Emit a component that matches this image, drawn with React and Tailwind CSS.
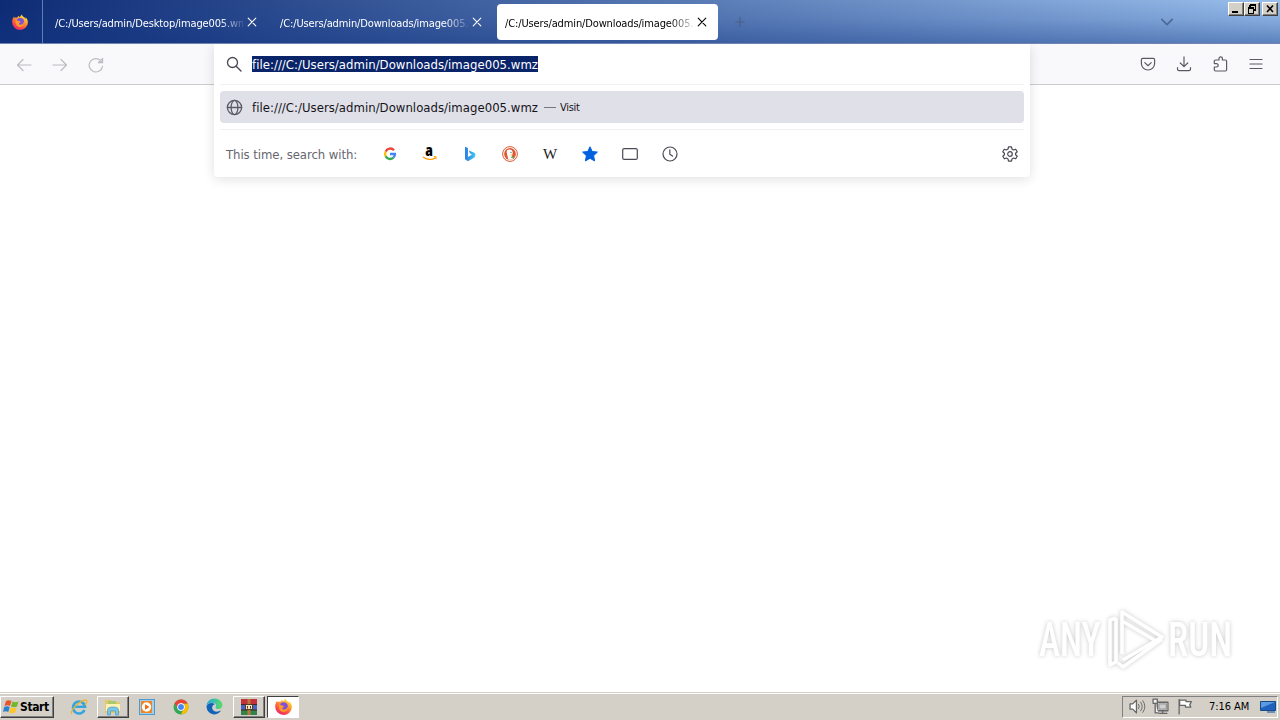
import React from "react";

const ui = "font-['DejaVu_Sans_Condensed','DejaVu_Sans',sans-serif] [font-stretch:condensed]";

function Svg({ s = 16, children, className = "" }) {
  return (
    <svg width={s} height={s} viewBox="0 0 16 16" fill="none" stroke="currentColor" strokeWidth="1.2" strokeLinecap="round" strokeLinejoin="round" className={`shrink-0 ${className}`}>
      {children}
    </svg>
  );
}

function Firefox({ id, s = 16 }) {
  return (
    <svg width={s} height={s} viewBox="0 0 16 16" className="shrink-0">
      <defs>
        <linearGradient id={id} x1="0.8" y1="0" x2="0.25" y2="1">
          <stop offset="0" stopColor="#fff04f" />
          <stop offset="0.35" stopColor="#ffa62c" />
          <stop offset="0.65" stopColor="#ff5b3c" />
          <stop offset="1" stopColor="#e8207a" />
        </linearGradient>
      </defs>
      <path d="M9.7.2c.2 1.3 1.1 2 2.1 2.9 1.1.8 1.5 1.3 1.8 1.9.1-.7 0-1.2-.2-1.7 1.7 1.3 2.5 3.2 2.5 5.1A7.8 7.8 0 0 1 8 16 7.8 7.8 0 0 1 .2 8.2C.1 6 .9 3.7 2.2 2.5c0 .6.1 1 .3 1.5.7-.4 1.6-.5 2.4-.3C5.5 2.7 6.3 2 7.3 1.700c-.3.6-.3 1 0 1.500.9-.6 1.900-1.500 2.400-3z" fill={`url(#${id})`} />
      <circle cx="8.200" cy="8" r="3.900" fill="#8050d8" />
      <path d="M3.600 6.500c1.300-.5 2.400 0 3.300.8 1 .1 1.700.2 1.600.8-.1.700-1.100.8-1.600 1.200-.3 1 .8 1.700 2.100 1.500 1.400-.2 2.500-1.500 2.400-3.100 1.400 2.700-.5 5.300-3.300 5.300-2.800 0-5-2.600-4.500-6.500z" fill="#ff9a28" />
    </svg>
  );
}

function Close() {
  return (
    <svg width="10" height="10" viewBox="0 0 10 10" stroke="currentColor" strokeWidth="1.1" strokeLinecap="round" className="shrink-0">
      <path d="M1.200 1.200l7.600 7.600M8.800 1.200l-7.600 7.600" />
    </svg>
  );
}

function Tab({ title, active, className = "" }) {
  return (
    <div className={`flex h-9 shrink-0 items-center rounded pl-2 pr-[11px] ${active ? "bg-white text-black" : "text-white"} ${className}`}>
      <div className="mt-[3px] h-4 w-[188px] shrink-0 overflow-hidden whitespace-nowrap text-[11px] leading-4 tracking-[-0.13px] [mask-image:linear-gradient(to_right,black_164px,transparent_192px)]">{title}</div>
      <div className="ml-auto flex"><Close /></div>
    </div>
  );
}

const bevel = "border border-t-white border-l-white border-r-[#404040] border-b-[#404040] bg-[#d4d0c8] shadow-[inset_-1px_-1px_0_#808080]";

function WinButton({ children, className = "" }) {
  return (
    <div className={`flex h-[14px] w-4 items-center justify-center ${bevel} ${className}`}>
      <svg width="12" height="12" viewBox="0 0 12 12" fill="none" stroke="#000" shapeRendering="crispEdges">{children}</svg>
    </div>
  );
}

function TabBar() {
  return (
    <div className="h-11 shrink-0 border-b border-[#7185b2] bg-[linear-gradient(to_right,#0a246a,#a6caf0)]">
      <div className="flex h-full bg-[linear-gradient(to_bottom,rgba(40,100,200,0.10),rgba(30,75,165,0.24)_45%,rgba(20,60,140,0.50))]">
        <div className="flex w-[43px] shrink-0 items-center justify-center border-r border-[#607db8] pr-[2px]"><Firefox id="fxtop" /></div>
        <div className="flex pt-1">
          <Tab title="/C:/Users/admin/Desktop/image005.wmz" className="ml-1 w-[221px]" />
          <Tab title="/C:/Users/admin/Downloads/image005.wmz" className="ml-1 w-[221px]" />
          <Tab title="/C:/Users/admin/Downloads/image005.wmz" active className="ml-1 w-[221px]" />
        </div>
        <div className="flex w-[43px] items-center justify-center text-[#4b5f88]">
          <Svg s={14}><path d="M8 3v10M3 8h10" strokeWidth="1.400" /></Svg>
        </div>
        <div className="ml-auto mr-[54px] flex items-center text-[#4d6a98]">
          <Svg s={14}><path d="M2 5l6 6 6-6" strokeWidth="1.900" /></Svg>
        </div>
        <div className="mr-[2px] flex pt-[2px]">
          <WinButton><path d="M2 9h6" strokeWidth="2" /></WinButton>
          <WinButton><path d="M4 2h6M4 4.500V2M9.500 2v5H8M2 5h5.500" strokeWidth="1.400" /><path d="M2.500 5v5h5V5" /></WinButton>
          <WinButton className="ml-[2px]"><path d="M3 2.500l6 6.500M9 2.500L3 9" strokeWidth="1.600" shapeRendering="auto" /></WinButton>
        </div>
      </div>
    </div>
  );
}

function Toolbar() {
  return (
    <div className="flex h-[41px] shrink-0 items-center border-b border-[#ccccd0] bg-[#f9f9fb] px-4 text-[#5b5b66]">
      <div className="flex gap-5 pt-px text-[#bcbcc1]">
        <Svg><path d="M1.500 8h13.500M7 2.500L1.500 8 7 13.500" /></Svg>
        <Svg><path d="M14.500 8H1M9 2.500L14.500 8 9 13.500" /></Svg>
        <Svg><path d="M14.500 9.300A6.700 6.700 0 1 1 12.700 3.600L14.300 5.200M14.600 1.500v4.200H10.400z" /></Svg>
      </div>
      <div className="ml-auto flex gap-5">
        <Svg><path d="M2.700 2.400h10.600c.8 0 1.300.5 1.300 1.300v3.700a6.600 6.600 0 0 1-13.200 0V3.700c0-.8.5-1.300 1.300-1.300zM4.800 6.600L8 9.700l3.200-3.100" /></Svg>
        <Svg><path d="M8 .8v9.700M4.300 7L8 10.700 11.700 7M1.500 11.500v1.500c0 1 .6 1.600 1.600 1.600h9.800c1 0 1.600-.6 1.600-1.600v-1.500" /></Svg>
        <Svg><path d="M2.300 6.500V5.200c0-.8.400-1.200 1.200-1.200H7V2.600a1.700 1.700 0 0 1 3.400 0V4h3c.8 0 1.200.4 1.200 1.200v8.600c0 .8-.4 1.200-1.200 1.200H3.500c-.8 0-1.200-.4-1.200-1.200V11h2.200a1.700 1.700 0 0 0 0-3.400H2.300z" /></Svg>
        <Svg><path d="M2 3.500h12M2 8h12M2 12.500h12" /></Svg>
      </div>
    </div>
  );
}

function Engines() {
  return (
    <div className="flex gap-6 text-[#4a4a55]">
      <svg width="16" height="16" viewBox="0 0 16 16" fill="none" strokeWidth="2.300">
        <path d="M12 4.200A5 5 0 0 0 3.600 5.700" stroke="#ea4335" />
        <path d="M3.600 5.700a5 5 0 0 0 0 4.600" stroke="#fbbc05" />
        <path d="M3.600 10.300a5 5 0 0 0 7.800 1.400" stroke="#34a853" />
        <path d="M11.400 11.700A5 5 0 0 0 13 8H8" stroke="#4285f4" />
      </svg>
      <svg width="16" height="16" viewBox="0 0 16 16">
        <text x="3.300" y="9.500" fontFamily="Open Sans" fontWeight="800" fontSize="15.500" fill="#000">a</text>
        <path d="M1 11c3.500 3 8.800 3.200 12.200 1M11.800 10.700c1.800-.3 3 0 2 2.300" fill="none" stroke="#ff9a00" strokeWidth="1.200" />
      </svg>
      <svg width="16" height="16" viewBox="0 0 16 16">
        <defs><linearGradient id="bing"><stop stopColor="#2f7fe0" /><stop offset="1" stopColor="#40c7f3" /></linearGradient></defs>
        <path d="M3 .8l3 1.100v9l4-2.300-2-1-1.200-3 5.600 2.100c1.400 1 1.300 3.300 0 4.700L6 15.200l-3-2z" fill="url(#bing)" />
      </svg>
      <svg width="16" height="16" viewBox="0 0 16 16">
        <circle cx="8" cy="8" r="7.400" fill="#fff" stroke="#de5833" strokeWidth="1" />
        <circle cx="8" cy="8" r="5.900" fill="#de5833" />
        <path d="M6.300 13.500L4.800 7c-.6-2.700.9-3.800 2.800-3.600 2.500.2 3.500 1.800 3 4.300l-.6 2 1 3.300c-1.300.8-3 .9-4.700.5z" fill="#fff" />
        <path d="M8 8.500l3 .2-2 1.100z" fill="#ffc20d" />
        <path d="M8.500 11l3-.8v2l-2.500-.4z" fill="#4caf50" />
        <circle cx="9" cy="6.300" r=".6" fill="#345" />
      </svg>
      <div className="flex h-4 w-4 items-center justify-center font-['Liberation_Serif',serif] text-[15px] leading-4 text-[#222]">W</div>
      <svg width="16" height="16" viewBox="0 0 16 16" fill="#0060df" stroke="#0060df" strokeLinejoin="round">
        <path d="M8 .8l2.200 4.700 5.200.6-3.800 3.600 1 5.200L8 12.300l-4.600 2.600 1-5.200L.6 6.100l5.200-.6z" />
      </svg>
      <Svg><rect x=".7" y="2.600" width="14.600" height="10.800" rx="1.500" /></Svg>
      <Svg><circle cx="8" cy="8" r="7" /><path d="M7.800 3.800v4.500l2.700 1.800" /></Svg>
    </div>
  );
}

function UrlPanel() {
  return (
    <div className={`absolute left-[214px] top-11 flex h-[133px] w-[816px] flex-col rounded-b bg-white px-[6px] text-[#4a4a55] shadow-[0_2px_12px_rgba(0,0,0,0.13)] [clip-path:inset(0_-16px_-16px_-16px)] ${ui}`}>
      <div className="flex h-[41px] shrink-0 items-center border-b border-[#f0f0f2] pl-[6px]">
        <Svg><circle cx="6.500" cy="6.500" r="5" strokeWidth="1.300" /><path d="M10.200 10.200l4.800 4.800" strokeWidth="1.400" /></Svg>
        <div className="ml-[10px] h-4 w-[286px] whitespace-nowrap bg-[#0a246a] text-[13px] leading-[18px] tracking-[0.03px] text-white">file:///C:/Users/admin/Downloads/image005.wmz</div>
      </div>
      <div className="mt-[6px] flex h-8 shrink-0 items-center rounded bg-[#e0e0e8] pl-[6px] text-[#15141a]">
        <Svg s={17} className="text-[#5b5b66]"><circle cx="8" cy="8" r="6.700" /><ellipse cx="8" cy="8" rx="3.200" ry="6.700" /><path d="M1.300 8h13.400" /></Svg>
        <div className="ml-[9px] h-4 w-[286px] whitespace-nowrap text-[13px] leading-[18px] tracking-[0.03px]">file:///C:/Users/admin/Downloads/image005.wmz</div>
        <div className="ml-[6px] h-px w-3 bg-[#777782]" />
        <div className="ml-1 h-4 text-[11px] leading-[18px] tracking-[-0.3px]">Visit</div>
      </div>
      <div className="mt-[6px] flex flex-1 items-center border-t border-[#f0f0f2] pl-[6px] pr-[6px]">
        <div className="h-4 w-[156px] whitespace-nowrap text-[13px] leading-[18px] tracking-[-0.07px] text-[#66666f]">This time, search with:</div>
        <Engines />
        <div className="ml-auto flex">
          <Svg><path d="M6.500.8h3l.5 2.300 1.600.9 2.100-.8 1.500 2.600L13.600 7.200v1.600l1.600 1.400-1.500 2.600-2.100-.8-1.600.9-.5 2.300h-3l-.5-2.300-1.600-.9-2.100.8L.8 10.200l1.600-1.400V7.200L.8 5.800l1.500-2.600 2.100.8L6 3.100z" /><circle cx="8" cy="8" r="2.300" /></Svg>
        </div>
      </div>
    </div>
  );
}

function Watermark() {
  return (
    <div className="absolute left-[1036px] top-[608px] flex h-16 w-[200px] items-center text-white [filter:drop-shadow(0_0_2px_rgba(0,0,0,0.22))]">
      <div className="w-[68px]"><div className="origin-left scale-x-[0.73] whitespace-nowrap pl-1 font-['Roboto',sans-serif] text-[49px] font-medium leading-[70px]">ANY</div></div>
      <svg width="60" height="64" viewBox="0 0 60 64" fill="none" stroke="#fff" strokeWidth="3.500" strokeLinejoin="round" className="shrink-0">
        <path d="M18 46V4L58 29 19 52" /><path d="M12 10l-6 2v45l8-4" /><path d="M12 10v43M18 13l34 20M58 31L19 59l-5-4" />
      </svg>
      <div className="ml-1 w-[65px]"><div className="origin-left scale-x-[0.76] whitespace-nowrap font-['Roboto',sans-serif] text-[49px] font-medium leading-[70px]">RUN</div></div>
    </div>
  );
}

function Taskbar() {
  return (
    <div className={`flex h-7 shrink-0 items-center border-t border-[#d4d0c8] bg-[#d4d0c8] shadow-[inset_0_1px_0_white] ${ui}`}>
      <div className={`flex h-[22px] w-[54px] items-center pl-[2px] ${bevel}`}>
        <svg width="17" height="16" viewBox="0 0 17 16" className="shrink-0">
          <path d="M3 2c2-1 3.500-1 5.500 0L7 7C5 6 3.500 6 1.500 7z" fill="#e8552c" />
          <path d="M9.500 2.500c2 1 4 1 6 0L14 7.500c-2 1-4 1-6 0z" fill="#74b72a" />
          <path d="M1.200 8c2-1 3.600-1 5.500 0l-1.400 5c-2-1-3.600-1-5.300 0z" fill="#2a82cc" />
          <path d="M7.700 8.500c2 1 4 1 6 0l-1.500 5c-2 1-4 1-6 0z" fill="#ffc526" />
        </svg>
        <span className="text-[12px] font-bold leading-4 tracking-[-0.4px] text-black">Start</span>
      </div>
      <div className="flex items-center">
        <div className="ml-[10px] flex w-[33px] justify-center pr-[3px]">
          <svg width="18" height="18" viewBox="0 0 18 18" fill="none"><path d="M14.500 12a6 6 0 1 1 .5-3.200H4" stroke="#36a5de" strokeWidth="2.600" /><path d="M2 16C-1 13 10 2 16 2c2 1 0 4-1 5" stroke="#edb52f" strokeWidth="1.300" /></svg>
        </div>
        <div className={`flex h-[22px] w-8 items-center justify-center ${bevel}`}>
          <svg width="18" height="18" viewBox="0 0 18 18"><path d="M1 2h6l1 2h8v11H1z" fill="#e8c768" /><path d="M2 6h14v7H2z" fill="#fff2b4" /><path d="M4 3h8v3H4z" fill="#a9c96f" /><path d="M3.500 17v-5q0-3 5.500-3t5.500 3v5h-3v-4h-5v4z" fill="#75c6e8" stroke="#519abd" strokeWidth=".7" /></svg>
        </div>
        <div className="flex w-9 justify-center">
          <svg width="16" height="16" viewBox="0 0 16 16"><rect x=".5" y=".5" width="15" height="15" fill="#9ed0f0" stroke="#4c9bd0" /><rect x="2" y="2" width="11" height="12" fill="#f58220" /><circle cx="7.500" cy="8" r="4.700" fill="#fff" /><path d="M6 5.200L10.500 8 6 10.800z" fill="#ef6d12" /></svg>
        </div>
        <div className="flex w-8 justify-center">
          <svg width="16" height="16" viewBox="0 0 16 16"><circle cx="8" cy="8" r="7.500" fill="#34a853" /><path d="M14.700 4.500A7.500 7.500 0 0 1 8 15.500L11.300 8 8 4.500z" fill="#fbbc05" /><path d="M1.500 4.200L5 10 8 4.500h6.700A7.500 7.500 0 0 0 1.500 4.200" fill="#ea4335" /><circle cx="8" cy="8" r="3.500" fill="#4285f4" stroke="#fff" /></svg>
        </div>
        <div className="flex w-9 justify-center pr-px">
          <svg width="17" height="17" viewBox="0 0 16 16"><defs><linearGradient id="edge"><stop stopColor="#1fa5e4" /><stop offset="1" stopColor="#5fdc65" /></linearGradient></defs><path d="M.5 8C.5 3.500 4 .5 8 .5s7.500 2.800 7.500 6.200c0 2.300-1.600 3.700-3.700 3.700-1.800 0-2.800-.6-2.800-1.500 0-.5.600-.9.600-2C9.600 5.500 8 4.500 6 4.500 3 4.500.5 6 .5 8z" fill="url(#edge)" /><path d="M.5 8C.8 5.800 3.200 4.500 5.700 4.700 7 4.700 8 5.500 8.300 6c-1.500 0-2.500 1.400-2.500 2.900 0 2.500 2.500 4.300 5.200 3.900 1.500-.1 2.500-.7 3.300-1.200C13 14 10.500 15.500 8 15.500 3.800 15.500.5 12 .5 8z" fill="#1262b8" /></svg>
        </div>
        <div className={`flex h-[22px] w-8 items-center justify-center ${bevel}`}>
          <svg width="18" height="18" viewBox="0 0 18 18"><path d="M1 1h16v5H1z" fill="#c5303d" /><path d="M1 6h16v6H1z" fill="#4665c4" /><path d="M1 12h16v5H1z" fill="#33834a" /><path d="M1 6.500h16M1 12h16" stroke="#45251d" /><path d="M7.500 1h3v16h-3z" fill="#b77a36" /><rect x="5.500" y="6.500" width="7" height="5" fill="#f2e6c4" stroke="#553b20" /><path d="M7.500 8v2.500M10.500 8v2.500" stroke="#553b20" /></svg>
        </div>
        <div className="ml-[2px] flex h-[22px] w-8 items-center justify-center border border-b-white border-l-[#404040] border-r-white border-t-[#404040] bg-white"><Firefox id="fxbottom" s={17} /></div>
      </div>
      <div className="ml-auto mr-[2px] flex h-[22px] w-[156px] items-center border border-b-white border-l-[#808080] border-r-white border-t-[#808080] pl-[6px]">
        <div className="flex gap-[7px] text-[#666]">
          <Svg s={17}><path d="M1 5.500h2.500L7 2v12l-3.500-3.500H1z" fill="#fff" /><path d="M9 6q1.500 2 0 4M11 4q3 4 0 8M13 2.500q4 5.500 0 11" strokeWidth=".9" /></Svg>
          <Svg s={17} className="-ml-px mr-px"><path d="M5 4h10v8H5zM7 14.500h7M10 12v2" fill="#eee" /><path d="M6.500 5.500h7v5h-7z" fill="#d0d0d0" stroke="#999" /><path d="M1 1v4h4V1zM3 5v9h3" fill="#eee" /></Svg>
          <Svg s={17}><path d="M2 1.500V15" /><path d="M2.500 2h6v1.500h5l-1.500 3 1 2H8V7H2.500z" fill="#fff" /></Svg>
        </div>
        <div className="ml-[15px] w-[42px] whitespace-nowrap text-[11px] leading-4 tracking-[-0.05px] text-black">7:16 AM</div>
        <svg width="16" height="16" viewBox="0 0 16 16" className="ml-[9px] shrink-0"><path d="M.5 2.500h15v9H.5z" fill="#1e62bd" stroke="#174a87" /><path d="M1 3h14L1 9z" fill="#5c9ae1" /><path d="M7 12h8v2H7z" fill="#6e90b5" /></svg>
      </div>
    </div>
  );
}

export default function App() {
  return (
    <div className={`relative flex h-[720px] w-[1280px] flex-col overflow-hidden bg-white ${ui}`}>
      <TabBar />
      <Toolbar />
      <div className="flex-1 bg-white" />
      <Taskbar />
      <UrlPanel />
      <Watermark />
    </div>
  );
}
